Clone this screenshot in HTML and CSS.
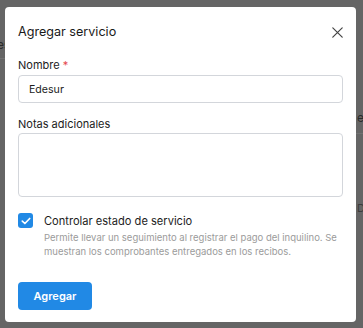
FILE: index.html
```html
<!DOCTYPE html>
<html lang="es">
<head>
<meta charset="utf-8">
<link rel="stylesheet" href="styles.css">
</head>
<body>
<div class="backdrop">
  <div class="bg-text bg-left">es</div>
  <div class="bg-line bg-line-left"></div>
  <div class="bg-text bg-right1">e</div>
  <div class="bg-line bg-line-right"></div>
  <div class="bg-text bg-right2">D</div>
  <div class="modal">
    <div class="header">
      <h2 class="title">Agregar servicio</h2>
      <button class="close" aria-label="Cerrar">
        <svg width="11" height="11" viewBox="0 0 11 11"><path d="M0.8 0.8L10.2 10.2M10.2 0.8L0.8 10.2" stroke="#444" stroke-width="1.2" stroke-linecap="round"/></svg>
      </button>
    </div>
    <label class="label">Nombre <span class="req">*</span></label>
    <div class="input">Edesur</div>
    <label class="label label-notes">Notas adicionales</label>
    <div class="textarea"></div>
    <div class="check-row">
      <span class="checkbox">
        <svg width="10" height="8" viewBox="0 0 10 8"><path d="M1.3 4.1L3.9 6.5L8.7 1.5" fill="none" stroke="#fff" stroke-width="1.7" stroke-linecap="round" stroke-linejoin="round"/></svg>
      </span>
      <div class="check-text">
        <div class="check-label">Controlar estado de servicio</div>
        <div class="check-desc">Permite llevar un seguimiento al registrar el pago del inquilino. Se muestran los comprobantes entregados en los recibos.</div>
      </div>
    </div>
    <button class="btn">Agregar</button>
  </div>
</div>
</body>
</html>
```

FILE: styles.css
```css
* { box-sizing: border-box; }
html, body { margin: 0; padding: 0; }
body {
  font-family: Inter, "Noto Sans", "Liberation Sans", sans-serif;
  background: #656565;
  width: 363px;
  height: 328px;
  overflow: hidden;
}
.backdrop {
  position: relative;
  width: 363px;
  height: 328px;
  background: #656565;
  padding: 7px 0 0 5px;
}
.bg-text {
  position: absolute;
  color: #2a2a2a;
  font-size: 12px;
}
.bg-left { left: -3px; top: 37px; }
.bg-right1 { left: 357px; top: 110px; }
.bg-right2 { left: 357px; top: 201px; color: #3c3c3c; font-size: 11px; }
.bg-line { position: absolute; height: 1px; background: #727272; }
.bg-line-left { left: 0; width: 6px; top: 58px; }
.bg-line-right { left: 356px; width: 7px; top: 133px; }

.modal {
  position: relative;
  width: 351px;
  height: 315px;
  background: #fff;
  border-radius: 4px;
  padding: 0 13px;
}
.header {
  display: flex;
  align-items: center;
  justify-content: space-between;
  height: 50px;
}
.title {
  margin: 0;
  font-size: 12.6px;
  font-weight: 400;
  color: #1a1a1a;
  line-height: 16px;
  margin-top: -1px;
}
.close {
  border: 0;
  background: none;
  padding: 0;
  width: 11px;
  height: 11px;
  display: flex;
}
.label {
  display: block;
  font-size: 11px;
  color: #1c1c1c;
  line-height: 16px;
  margin-bottom: 2px;
}
.req { color: #e5484d; }
.input {
  height: 28px;
  border: 1px solid #d3d6db;
  border-radius: 4px;
  font-size: 10.6px;
  color: #1c1c1c;
  padding: 0 10px;
  display: flex;
  align-items: center;
}
.label-notes { margin-top: 13px; margin-bottom: 1px; }
.textarea {
  height: 64px;
  border: 1px solid #d3d6db;
  border-radius: 4px;
}
.check-row {
  display: flex;
  gap: 11px;
  margin-top: 16px;
}
.checkbox {
  width: 15px;
  height: 15px;
  border-radius: 3px;
  background: #2189e5;
  display: flex;
  align-items: center;
  justify-content: center;
  flex-shrink: 0;
}
.check-label {
  font-size: 11.1px;
  color: #1c1c1c;
  line-height: 16px;
}
.check-desc {
  font-size: 9.5px;
  color: #9b9b9b;
  line-height: 14px;
  margin-top: 2px;
}
.btn {
  display: block;
  margin-top: 23px;
  border: 0;
  background: #2189e5;
  color: #fff;
  font-family: inherit;
  font-weight: 600;
  font-size: 11px;
  width: 74px;
  height: 28px;
  border-radius: 4px;
  padding: 0;
}
```
